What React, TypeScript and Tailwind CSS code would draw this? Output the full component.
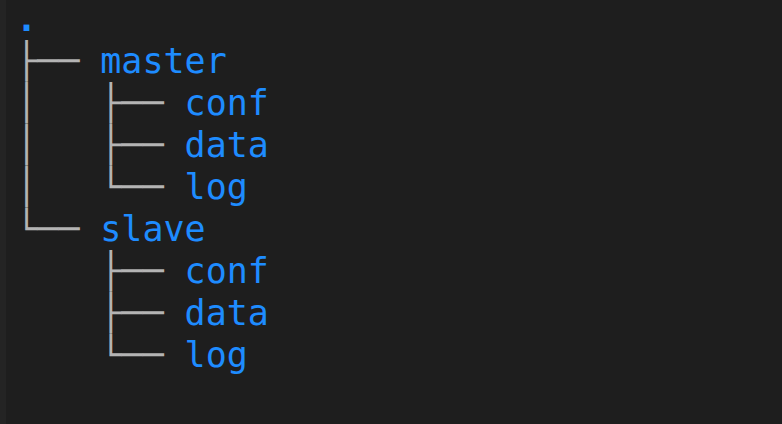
const lines: { prefix: string; name: string }[] = [
  { prefix: "", name: "." },
  { prefix: "├── ", name: "master" },
  { prefix: "│   ├── ", name: "conf" },
  { prefix: "│   ├── ", name: "data" },
  { prefix: "│   └── ", name: "log" },
  { prefix: "└── ", name: "slave" },
  { prefix: "    ├── ", name: "conf" },
  { prefix: "    ├── ", name: "data" },
  { prefix: "    └── ", name: "log" },
];

export default function App() {
  return (
    <div className="flex w-[782px] h-[424px] bg-[#1e1e1e] overflow-hidden">
      <div className="w-[6px] h-full bg-[#242424]"></div>
      <pre className="pl-[10px] -mt-[2px] text-[35px] leading-[42px] font-['DejaVu_Sans_Mono',monospace]">
        {lines.map((l, i) => (
          <div key={i} className="whitespace-pre">
            <span className="text-[#b4b4b4]">{l.prefix}</span>
            <span className={i === 0 ? "text-[#1e8cff] font-bold" : "text-[#1e8cff]"}>{l.name}</span>
          </div>
        ))}
      </pre>
    </div>
  );
}
